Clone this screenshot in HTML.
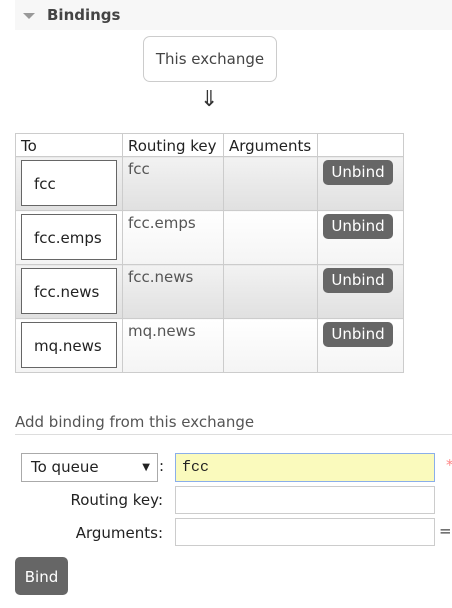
<!DOCTYPE html>
<html><head><meta charset="utf-8"><style>
*{box-sizing:border-box;margin:0;padding:0}
body{width:452px;height:608px;background:#fff;font-family:"DejaVu Sans",Verdana,"Liberation Sans",sans-serif;color:#444;position:relative;overflow:hidden;font-size:15px}
.abs{position:absolute}
.hdr{left:15px;top:0;width:437px;height:30px;background:#f7f7f7}
.tri{left:23px;top:13px;width:0;height:0;border-left:6px solid transparent;border-right:6px solid transparent;border-top:6px solid #999}
.btitle{left:47px;top:6px;font-weight:bold;font-size:15px;color:#444}
.exbox{left:143px;top:36px;width:134px;height:46px;border:1px solid #ccc;border-radius:7px;text-align:center;line-height:44px;font-size:15px;color:#444}
.arrow{left:200px;top:87px;font-size:22px;color:#333}
table{position:absolute;left:15px;top:133px;border-collapse:collapse;width:389px}
td,th{border:1px solid #ccc;vertical-align:top;font-size:15px;text-align:left;font-weight:normal}
th{height:23px;padding:3px 5px 0;color:#222;line-height:18px}
tr.r td{height:54px}
tr.o td{background:linear-gradient(#f2f2f2,#e0e0e0)}
tr.e td{background:linear-gradient(#fff,#f4f4f4)}
td.k{padding:3px 5px;color:#555;line-height:18px}
.q{margin:3px 5px;width:96px;height:46px;border:1px solid #666;background:#fff;line-height:46px;padding-left:12px;color:#222}
.ub{display:inline-block;margin:3px 5px;width:70px;height:25px;background:#666;color:#fff;border-radius:5px;text-align:center;line-height:25px;font-size:15px}
.h2{left:15px;top:413px;font-size:15px;color:#555}
.line{left:15px;top:434px;width:437px;height:1px;background:#ddd}
.sel{left:21px;top:453px;width:137px;height:29px;border:1px solid #aaa;background:#fff;padding-left:9px;line-height:27px;color:#222}
.inp{left:175px;width:260px;height:28px;border:1px solid #ccc;background:#fff}
.lbl{right:289px;color:#222;font-size:15px}
</style></head><body>
<div class="abs hdr"></div><div class="abs tri"></div><div class="abs btitle">Bindings</div>
<div class="abs exbox">This exchange</div>
<div class="abs arrow">⇓</div>
<table>
<tr><th style="width:107px">To</th><th style="width:101px">Routing key</th><th style="width:94px">Arguments</th><th></th></tr>
<tr class="r o"><td><div class="q">fcc</div></td><td class="k">fcc</td><td></td><td><span class="ub">Unbind</span></td></tr>
<tr class="r e"><td><div class="q">fcc.emps</div></td><td class="k">fcc.emps</td><td></td><td><span class="ub">Unbind</span></td></tr>
<tr class="r o"><td><div class="q">fcc.news</div></td><td class="k">fcc.news</td><td></td><td><span class="ub">Unbind</span></td></tr>
<tr class="r e"><td><div class="q">mq.news</div></td><td class="k">mq.news</td><td></td><td><span class="ub">Unbind</span></td></tr>
</table>
<div class="abs h2">Add binding from this exchange</div>
<div class="abs line"></div>
<div class="abs sel">To queue<span style="position:absolute;right:7px;font-size:10px">▼</span></div>
<div class="abs" style="left:159px;top:457px;color:#222">:</div>
<div class="abs inp" style="top:453px;height:29px;background:#fafabd;border:1px solid #8aaeea;font-family:'Liberation Mono',monospace;padding-left:6px;line-height:27px;color:#222">fcc</div>
<div class="abs" style="left:446px;top:456px;color:#f88">*</div>
<div class="abs lbl" style="top:491px">Routing key:</div>
<div class="abs inp" style="top:486px"></div>
<div class="abs lbl" style="top:524px">Arguments:</div>
<div class="abs inp" style="top:518px"></div>
<div class="abs" style="left:439px;top:522px;color:#444">=</div>
<div class="abs" style="left:15px;top:557px;width:53px;height:38px;background:#666;border-radius:5px;color:#fff;text-align:center;line-height:40px">Bind</div>
</body></html>
